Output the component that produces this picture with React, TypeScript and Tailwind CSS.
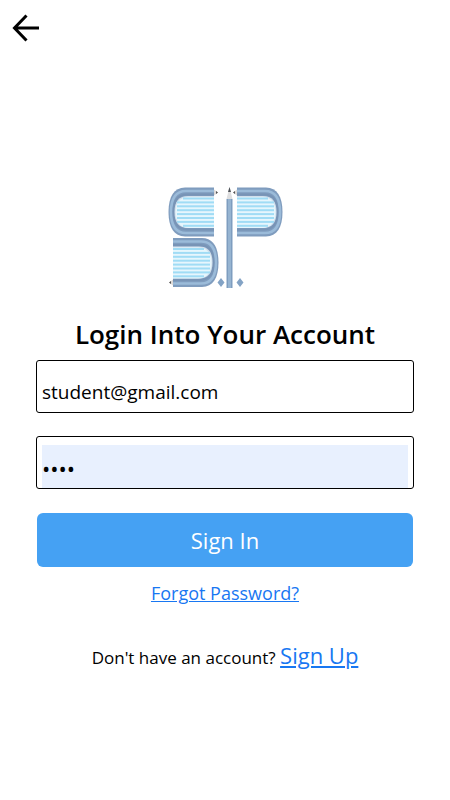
import { useState } from "react";

const stripes = [0, 1, 2, 3, 4, 5, 6, 7];

// A book seen from the side: rounded spine on the right, pages in between
function Book() {
    return (
        <g>
            <path d="M0 0H29C40 0 45.500 9 45.500 24.500C45.500 40 40 49 29 49H0Z" fill="#7f9cbe" />
            <path d="M0 3.500H28C38 3.500 43 11 43 24.500C43 38 38 45.500 28 45.500H0" fill="none" stroke="#9bbbd9" strokeWidth="2.600" />
            <path d="M0 7H27C36 7 40.500 13 40.500 24.500C40.500 36 36 42 27 42H0" fill="none" stroke="#7894b6" strokeWidth="1.800" />
            <path d="M0 8.500H26C35 8.500 39.500 14 39.500 24.500C39.500 35 35 40.500 26 40.500H0Z" fill="#d3e0ec" />
            <path d="M0 9.500H25C34 9.500 38.500 15 38.500 24.500C38.500 34 34 40.500 25 40.500H0Z" fill="#e6f6fd" />
            {stripes.map((i) => (
                <rect key={i} x="0" y={10 + i * 3.9} width={i === 0 || i === 7 ? 31 : 37} height="2" fill="#a0dcf5" />
            ))}
        </g>
    );
}

function Logo() {
    return (
        <svg viewBox="0 0 116 102" className="h-[102px] w-[116px]" role="img" aria-label="S.P. logo">
            <g transform="translate(47 1.500)">
                <g transform="scale(-1 1)">
                    <Book />
                </g>
            </g>
            <g transform="translate(6 52)">
                <Book />
            </g>
            <g transform="translate(70 1.500)">
                <Book />
            </g>
            <path d="M47 3.500L51 6.500L47 9.500Z M70 3.500L66 6.500L70 9.500Z M6 93.500L2 96.500L6 99.500Z" fill="#dcd9d7" />
            <path d="M49 5L51 6.500L49 8Z M68 5L66 6.500L68 8Z M4 95L2 96.500L4 98Z" fill="#555" />
            <path d="M62.500 1L65.500 13H59.500Z" fill="#dededf" />
            <path d="M62.500 1L64 6H61Z" fill="#4d5258" />
            <rect x="59.500" y="13" width="6" height="89" fill="#7e9dbf" />
            <rect x="61" y="13" width="3" height="89" fill="#96b4d1" />
            <path d="M54 92L57.500 96.500L54 101L50.500 96.500Z M73 92L76.500 96.500L73 101L69.500 96.500Z" fill="#83a3c5" />
        </svg>
    );
}

export default function App() {
    const [email, setEmail] = useState("student@gmail.com");
    const [password, setPassword] = useState("1234");

    return (
        <div className="min-h-screen bg-white font-['Segoe_UI','Open_Sans',sans-serif] text-black">
            <header className="flex px-3 pt-3">
                <button type="button" aria-label="Back">
                    <svg viewBox="0 0 28 32" className="h-8 w-7" fill="none" stroke="currentColor" strokeWidth="3">
                        <path d="M27 16H3M14.500 3.500L2.500 16L14.500 28.500" />
                    </svg>
                </button>
            </header>
            <main className="flex flex-col items-center px-9 pt-[142px]">
                <Logo />
                <h1 className="mt-7 text-[26px] leading-9 font-semibold">Login Into Your Account</h1>
                <form className="mt-2 flex w-full flex-col" onSubmit={(e) => e.preventDefault()}>
                    <div className="flex h-[53px] rounded-[3px] border border-black px-[5px] pt-2">
                        <input
                            type="email"
                            aria-label="Email"
                            value={email}
                            onChange={(e) => setEmail(e.target.value)}
                            className="w-full pt-1 text-[19px] outline-none"
                        />
                    </div>
                    <div className="mt-[23px] flex h-[53px] rounded-[3px] border border-black px-[5px] pt-2">
                        <input
                            type="password"
                            aria-label="Password"
                            value={password}
                            onChange={(e) => setPassword(e.target.value)}
                            className="w-full bg-[#e8f0fe] pt-1 text-[22px] outline-none"
                        />
                    </div>
                    <button type="submit" className="mx-px mt-6 h-[54px] rounded-md bg-[#45a1f3] text-[22px] text-white">
                        Sign In
                    </button>
                </form>
                <a href="#forgot" className="mt-3 text-lg leading-7 text-[#1877f2] underline">
                    Forgot Password?
                </a>
                <p className="mt-[30px] text-[17px] leading-9 font-medium">
                    Don't have an account?{" "}
                    <a href="#signup" className="text-[22px] text-[#1877f2] underline">
                        Sign Up
                    </a>
                </p>
            </main>
        </div>
    );
}
